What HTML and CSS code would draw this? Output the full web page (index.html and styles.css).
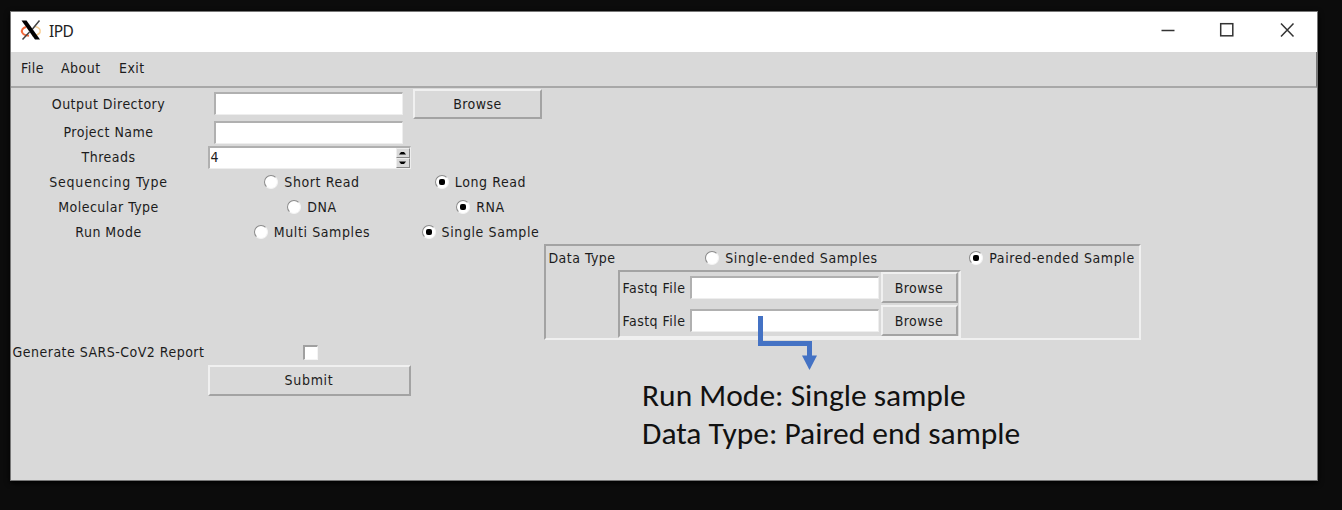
FILE: index.html
```html
<!DOCTYPE html>
<html lang="en">
<head>
<meta charset="utf-8">
<title>IPD</title>
<link rel="stylesheet" href="styles.css">
</head>
<body>
<main class="window">
  <header class="titlebar">
    <svg class="logo" width="22" height="22" viewBox="0 0 22 22">
      <path d="M6 8C3 9 1 11 2.200 13.500C3 15.500 5.500 16.500 9 16.800" fill="none" stroke="#f26a3c" stroke-width="2"/>
      <path d="M15 7.500C19 8.500 21 10.500 20 13.500C18.500 15.800 15.500 16.500 12 16.800" fill="none" stroke="#f7cf95" stroke-width="1.600"/>
      <path d="M19.500 1.500L12.500 10M9.500 13L2.500 20.500" stroke="#444" stroke-width="1.500"/>
      <path d="M1.500 1.500H6.500L20 20.500H15Z" fill="#000"/>
    </svg>
    <h1 class="title">IPD</h1>
    <svg class="controls" width="136" height="16" viewBox="0 0 136 16" fill="none" stroke="#333" stroke-width="1.500">
      <path d="M2.500 8.500H15.500"/>
      <rect x="61.700" y="1.700" width="12.100" height="12.100"/>
      <path d="M122 1.500L134.500 14.500M134.500 1.500L122 14.500"/>
    </svg>
  </header>
  <nav class="menubar"><span class="file">File</span><span class="about">About</span><span>Exit</span></nav>

  <section class="form">
    <label>Output Directory</label>
    <input class="entry" type="text">
    <button class="button wide">Browse</button>

    <label class="first">Project Name</label>
    <input class="entry" type="text">

    <label class="first">Threads</label>
    <div class="spinbox"><span>4</span>
      <div class="steps">
        <i><svg width="9" height="4"><path d="M1 3.500L3 1H6L8 3.500Z"/></svg></i>
        <i><svg width="9" height="4"><path d="M1 .5L3 3H6L8 .5Z"/></svg></i>
      </div>
    </div>

    <label class="first sequencing">Sequencing Type</label>
    <label class="option"><i class="radio"></i><span>Short Read</span></label>
    <label class="option"><i class="radio on"></i><span>Long Read</span></label>

    <label class="first">Molecular Type</label>
    <label class="option"><i class="radio"></i><span>DNA</span></label>
    <label class="option"><i class="radio on"></i><span>RNA</span></label>

    <label class="first">Run Mode</label>
    <label class="option"><i class="radio"></i><span>Multi Samples</span></label>
    <label class="option"><i class="radio on"></i><span>Single Sample</span></label>

    <div class="frame data">
      <label>Data Type</label>
      <label class="option"><i class="radio"></i><span>Single-ended Samples</span></label>
      <label class="option"><i class="radio on"></i><span>Paired-ended Sample</span></label>
      <div class="frame files">
        <label>Fastq File</label><input class="entry" type="text"><button class="button">Browse</button>
        <label>Fastq File</label><input class="entry" type="text"><button class="button">Browse</button>
      </div>
    </div>

    <label class="first report">Generate SARS-CoV2 Report</label>
    <i class="check"></i>
    <button class="button submit">Submit</button>
  </section>

  <aside class="callout">
    <svg class="arrow" width="60" height="55" viewBox="0 0 60 55">
      <path d="M3.500 0V27.500H52.500V40" fill="none" stroke="#4472c4" stroke-width="5"/>
      <path d="M45 39.500H60L52.500 54Z" fill="#4472c4"/>
    </svg>
    <p>Run Mode: Single sample</p>
    <p>Data Type: Paired end sample</p>
  </aside>
</main>
</body>
</html>
```
FILE: styles.css
```css
* { box-sizing: border-box; }
body {
  margin: 0;
  height: 510px;
  padding: 11px 0 0 10px;
  overflow: hidden;
  background: #0c0c0c;
  color: #1c1c1c;
  font: 14px/16px "DejaVu Sans Condensed", "DejaVu Sans", sans-serif;
  font-stretch: condensed;
  letter-spacing: 0.48px;
}
.window {
  position: relative;
  width: 1308px;
  height: 470px;
  border: 1px solid #777;
  background: #d9d9d9;
  box-shadow: 0 2px 5px #000;
}
.titlebar {
  display: flex;
  align-items: center;
  height: 40px;
  padding: 0 22px 4px 9px;
  background: #fff;
}
.title {
  margin: 1px 0 0 7px;
  font: 15.5px/20px "Noto Sans", sans-serif;
  letter-spacing: -0.6px;
  color: #222;
}
.controls { margin-left: auto; }
.menubar {
  display: flex;
  height: 36px;
  padding: 8px 10px;
  border-bottom: 2px solid #a8a8a8;
  border-right: 1px solid #777;
}
.file { width: 40px; }
.about { width: 58px; }
.form {
  display: grid;
  grid-template-columns: 193px 202px 129px 597px;
  grid-template-rows: 31px 26px 24px 25px 25px 25px 96px 24px 32px;
  column-gap: 3px;
  padding-left: 1px;
  align-items: center;
  justify-items: center;
  white-space: nowrap;
}
.first { grid-column: 1; }
.sequencing { letter-spacing: 0.8px; }
.report { grid-row: 8; }
.entry {
  width: 189px;
  height: 23px;
  padding: 0;
  border: solid;
  border-width: 2px 1px 1px 2px;
  border-color: #b0b0b0 #eee #eee #b0b0b0;
  border-radius: 0;
  background: #fff;
}
.form > .entry { margin-right: 2px; }
.button {
  height: 30px;
  padding: 0;
  border: 2px solid;
  border-color: #f0f0f0 #a3a3a3 #a3a3a3 #f0f0f0;
  border-radius: 0;
  background: #d9d9d9;
  color: inherit;
  font: inherit;
  letter-spacing: inherit;
}
.wide { width: 129px; }
.submit { grid-column: 2; grid-row: 9; width: 203px; height: 31px; letter-spacing: 0.7px; }
.spinbox {
  display: flex;
  justify-content: space-between;
  width: 203px;
  height: 23px;
  border: solid;
  border-width: 2px 1px 1px 2px;
  border-color: #b0b0b0 #eee #eee #b0b0b0;
  background: #fff;
  padding-left: 1px;
  line-height: 19px;
}
.steps { display: grid; width: 14px; background: #d9d9d9; }
.steps i {
  display: flex;
  justify-content: center;
  align-items: center;
  border: 1px solid;
  border-color: #eee #888 #888 #eee;
}
.option {
  display: flex;
  align-items: center;
  gap: 6px;
  padding-left: 6px;
  letter-spacing: 0.6px;
}
.radio {
  display: grid;
  place-items: center;
  width: 14px;
  height: 14px;
  border: 1px solid;
  border-color: #8a8a8a #f4f4f4 #f4f4f4 #8a8a8a;
  border-radius: 50%;
  background: #fff;
}
.on::after { content: ""; width: 6px; height: 6px; border-radius: 2px; background: #000; }
.check {
  grid-column: 2;
  grid-row: 8;
  width: 15px;
  height: 15px;
  margin-left: 3px;
  border: solid;
  border-width: 2px 1px 1px 2px;
  border-color: #a0a0a0 #f4f4f4 #f4f4f4 #a0a0a0;
  background: #fff;
}
.frame { border: 2px solid; border-color: #a3a3a3 #f0f0f0 #f0f0f0 #a3a3a3; }
.data {
  grid-column: 4;
  grid-row: 7;
  display: grid;
  grid-template-columns: 72px 343px 178px;
  grid-template-rows: 24px 68px;
  align-items: center;
  justify-items: center;
  width: 597px;
  height: 96px;
  margin-left: -2px;
}
.data > .option { padding-left: 4px; }
.files {
  grid-column: 2;
  display: grid;
  grid-template-columns: 68px 192px 78px;
  grid-template-rows: 31px 31px;
  row-gap: 2px;
  align-items: center;
  justify-items: center;
  width: 343px;
  height: 68px;
}
.files .button { width: 77px; height: 31px; }
.callout {
  position: absolute;
  left: 631px;
  top: 304px;
  color: #111;
  font: 31.5px/38px Carlito, Lato, sans-serif;
  letter-spacing: 0;
  white-space: nowrap;
}
.arrow { display: block; margin: 0 0 5px 115px; }
.callout p { margin: 0; }
```
